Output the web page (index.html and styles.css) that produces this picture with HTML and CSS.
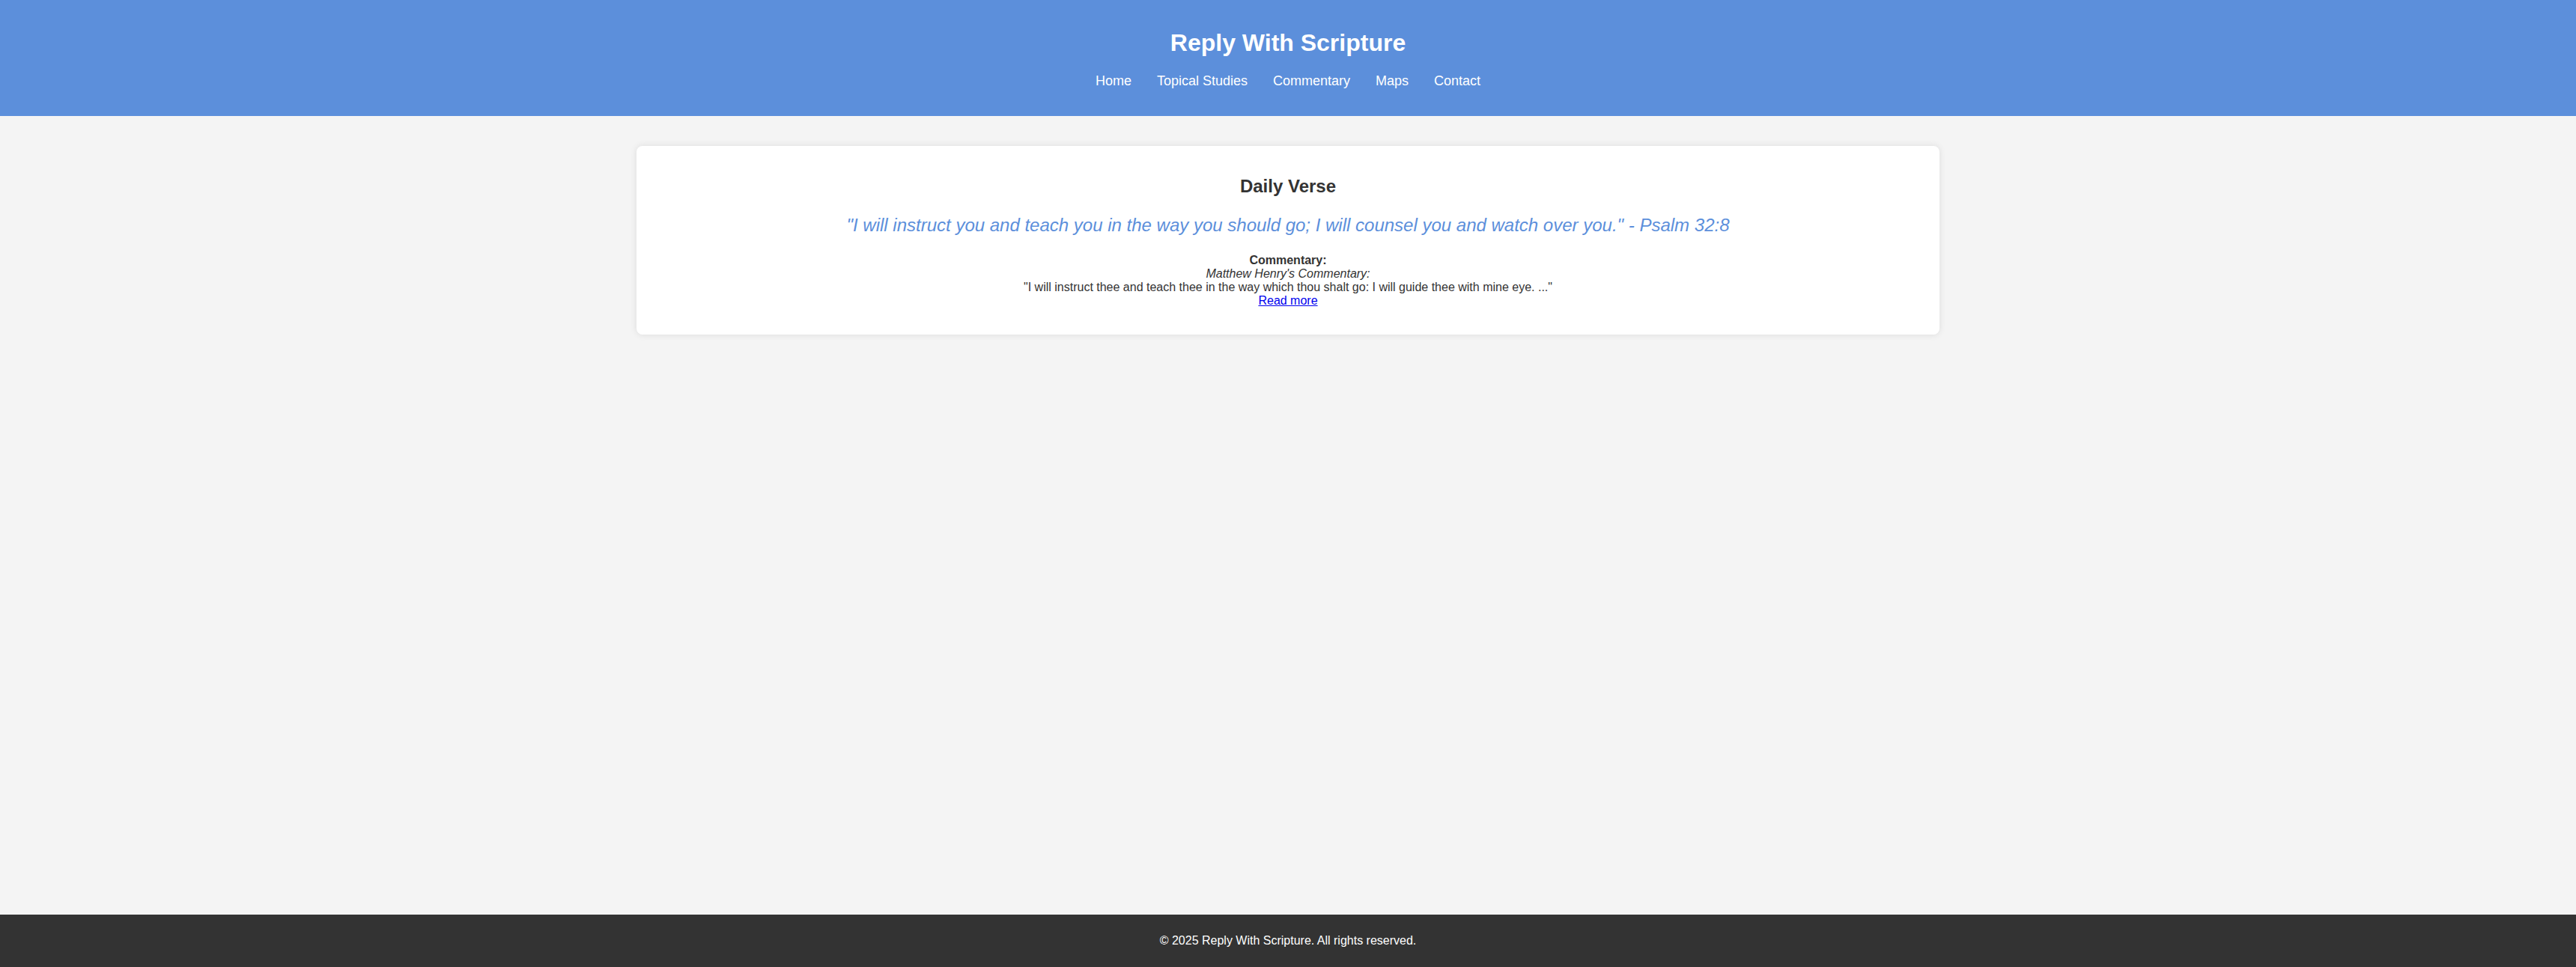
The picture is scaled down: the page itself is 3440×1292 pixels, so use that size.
FILE: index.html
```html
<!DOCTYPE html>
<html lang="en">
<head>
<meta charset="utf-8">
<title>Reply With Scripture</title>
<link rel="stylesheet" href="styles.css">
</head>
<body>
<header class="site-header">
  <h1 class="site-title">Reply With Scripture</h1>
  <nav class="site-nav">
    <a href="#">Home</a>
    <a href="#">Topical Studies</a>
    <a href="#">Commentary</a>
    <a href="#">Maps</a>
    <a href="#">Contact</a>
  </nav>
</header>
<main class="content">
  <section class="card">
    <h2 class="card-title">Daily Verse</h2>
    <p class="verse">"I will instruct you and teach you in the way you should go; I will counsel you and watch over you." - Psalm 32:8</p>
    <p class="commentary">
      <strong>Commentary:</strong><br>
      <em>Matthew Henry's Commentary:</em><br>
      "I will instruct thee and teach thee in the way which thou shalt go: I will guide thee with mine eye. ..."<br>
      <a href="#">Read more</a>
    </p>
  </section>
</main>
<footer class="site-footer">
  <p>&copy; 2025 Reply With Scripture. All rights reserved.</p>
</footer>
</body>
</html>
```

FILE: styles.css
```css
html, body {
  margin: 0;
  padding: 0;
}

body {
  font-family: "Liberation Sans", Arial, Helvetica, sans-serif;
  font-size: 16px;
  color: #333;
  background: #f4f4f4;
  min-height: 100vh;
  display: flex;
  flex-direction: column;
}

.site-header {
  background: #5c8fdb;
  color: #fff;
  text-align: center;
  padding: 39px 0 36px;
}

.site-title {
  margin: 0 0 22px;
  font-size: 32px;
  line-height: 37px;
  font-weight: bold;
}

.site-nav {
  display: flex;
  justify-content: center;
  gap: 34px;
  font-size: 18px;
  line-height: 21px;
}

.site-nav a {
  color: #fff;
  text-decoration: none;
}

.content {
  flex: 1;
  padding-top: 40px;
}

.card {
  width: 1740px;
  box-sizing: border-box;
  margin: 0 auto;
  padding: 20px;
  background: #fff;
  border-radius: 8px;
  box-shadow: 0 0 10px rgba(0, 0, 0, 0.1);
  text-align: center;
}

.card-title {
  font-size: 24px;
  margin: 20px 0;
}

.verse {
  font-size: 24px;
  font-style: italic;
  color: #5c8fdb;
  margin: 24px 0;
}

.commentary {
  margin: 16px 0;
}

.commentary a {
  color: #0000ee;
}

.site-footer {
  background: #333;
  color: #fff;
  text-align: center;
  padding: 10px 0;
}

.site-footer p {
  margin: 16px 0;
}
```
